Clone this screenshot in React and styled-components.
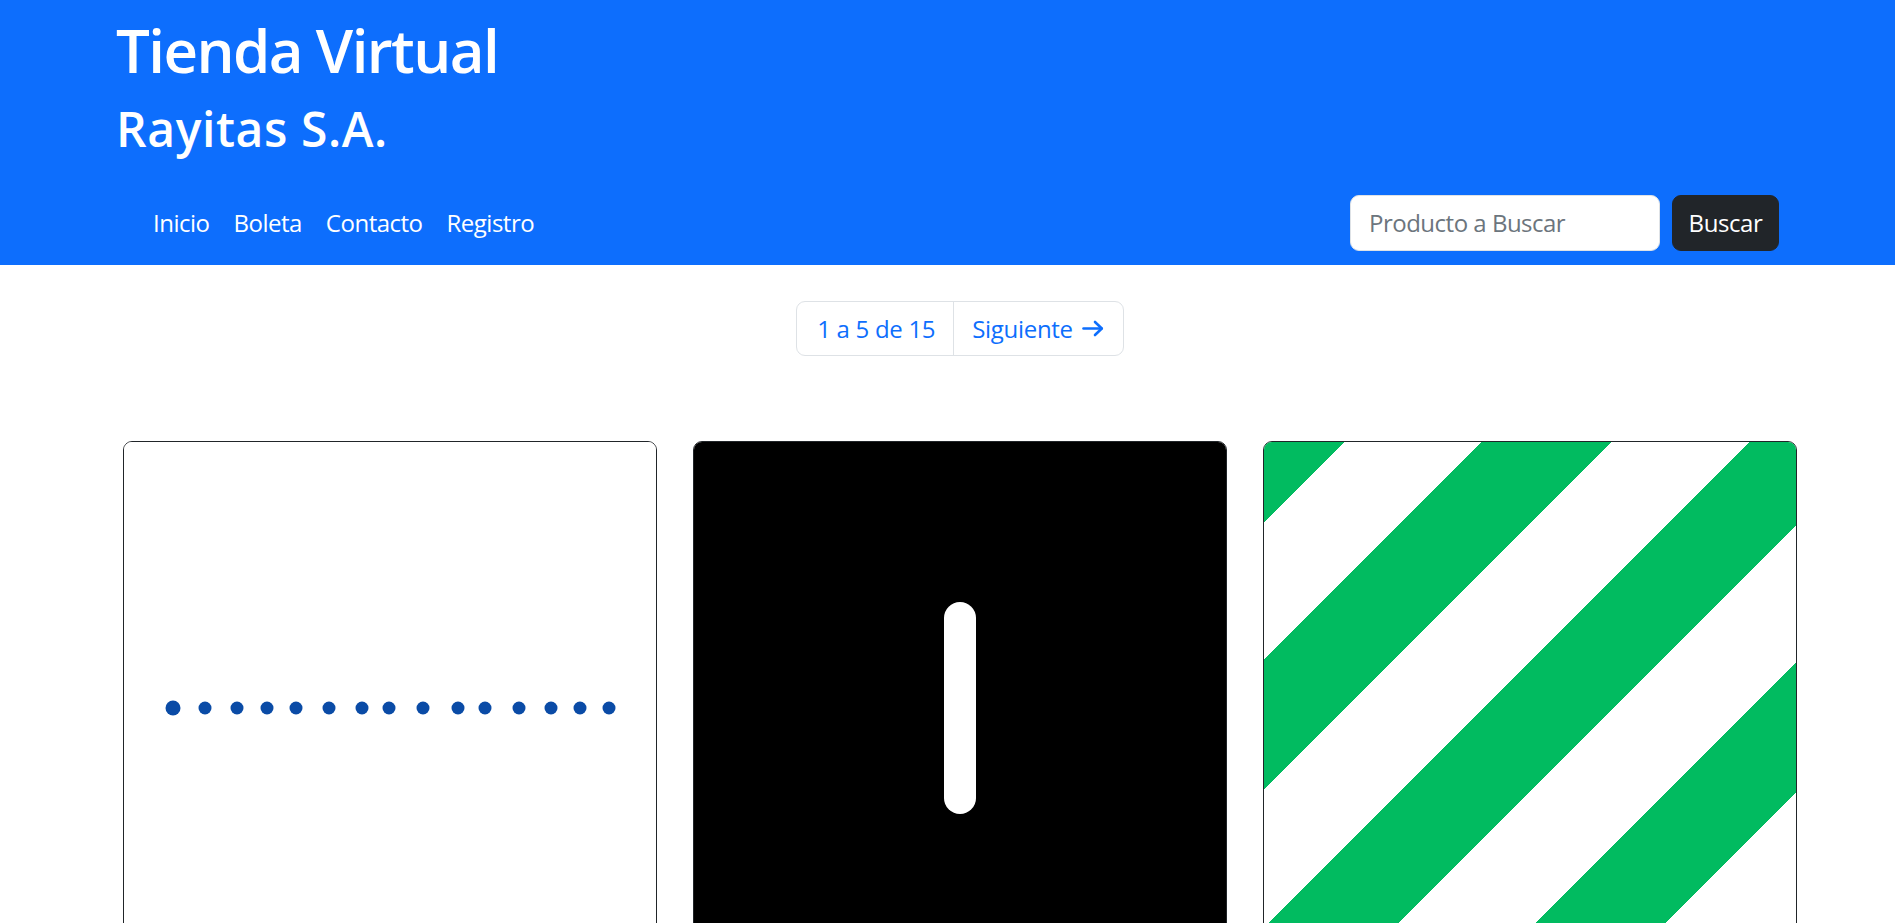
import React from 'react';
import styled, { createGlobalStyle } from 'styled-components';

const GlobalStyle = createGlobalStyle`
  body {
    margin: 0;
    font-family: "Segoe UI", "Open Sans", "Noto Sans", sans-serif;
    color: #212529;
    background: #fff;
  }
`;

const Header = styled.header`
  background-color: #0d6efd;
  color: #fff;
  padding: 14px 116px 14px 116px;
`;

const Brand = styled.h1`
  margin: 0 0 14px;
  font-size: 60px;
  font-weight: 600;
  line-height: 72px;
  letter-spacing: -1.6px;
`;

const SubBrand = styled.h2`
  margin: 0;
  font-size: 48px;
  font-weight: 600;
  line-height: 57.6px;
  letter-spacing: 0.6px;
`;

const NavBar = styled.nav`
  display: flex;
  align-items: center;
  justify-content: space-between;
  margin-top: 37px;
`;

const NavList = styled.ul`
  display: flex;
  list-style: none;
  margin: 0;
  padding: 0 0 0 25px;
`;

const NavLink = styled.a`
  display: block;
  padding: 0 12px;
  font-size: 24px;
  line-height: 36px;
  letter-spacing: -0.5px;
  color: #fff;
  text-decoration: none;
`;

const SearchForm = styled.form`
  display: flex;
  gap: 12px;
`;

const SearchInput = styled.input`
  width: 310px;
  height: 56px;
  box-sizing: border-box;
  padding: 9px 18px;
  font-family: inherit;
  font-size: 24px;
  letter-spacing: -0.5px;
  color: #212529;
  background: #fff;
  border: 1px solid #dee2e6;
  border-radius: 9px;

  &::placeholder {
    color: #6c757d;
  }

  &:focus {
    outline: none;
  }
`;

const SearchButton = styled.button`
  width: 107px;
  height: 56px;
  padding: 0;
  font-family: inherit;
  font-size: 24px;
  letter-spacing: -0.4px;
  color: #fff;
  background-color: #212529;
  border: 1px solid #212529;
  border-radius: 9px;
  cursor: pointer;
`;

const Main = styled.main`
  padding: 36px 0 0 25px;
`;

const Container = styled.div`
  max-width: 1710px;
  margin: 0 auto;
  padding: 0 18px;
  box-sizing: border-box;
`;

const PagerRow = styled.div`
  display: flex;
  justify-content: center;
  margin-bottom: 85px;
`;

const Pager = styled.div`
  display: flex;
  border: 1px solid #dee2e6;
  border-radius: 9px;
  height: 55px;
  box-sizing: border-box;
`;

const PageItem = styled.a`
  display: flex;
  align-items: center;
  gap: 9px;
  padding: ${(p) => (p.$first ? '0 18px 0 20px' : '0 19px 0 18px')};
  font-size: 24px;
  letter-spacing: -0.3px;
  color: #0d6efd;
  text-decoration: none;
  border-left: ${(p) => (p.$first ? 'none' : '1px solid #dee2e6')};
`;

const CardGrid = styled.div`
  display: grid;
  grid-template-columns: repeat(3, 1fr);
  gap: 36px;
`;

const Card = styled.div`
  border: 1px solid #212529;
  border-radius: 9px;
  overflow: hidden;
  background: #fff;
`;

const CardImage = styled.div`
  aspect-ratio: 1 / 1;
  background: ${(p) => p.$bg};

  svg {
    display: block;
    width: 100%;
    height: 100%;
  }
`;

const StripedImage = styled(CardImage)`
  background: repeating-linear-gradient(
    135deg,
    #01bb60 0px,
    #01bb60 57px,
    #fff 57px,
    #fff 154px,
    #01bb60 154px,
    #01bb60 189px
  );
`;

const dots = [49, 81, 113, 143, 172, 205, 238, 265, 299, 334, 361, 395, 427, 456, 485];

const ArrowRight = () => (
  <svg width="22" height="17" viewBox="0 0 22 17" fill="none" stroke="currentColor" strokeWidth="2.6" strokeLinecap="round" strokeLinejoin="round">
    <path d="M1.5 8.5h18" />
    <path d="M13 2l6.8 6.5L13 15" />
  </svg>
);

const App = () => {
  return (
    <>
      <GlobalStyle />
      <Header>
        <Brand>Tienda Virtual</Brand>
        <SubBrand>Rayitas S.A.</SubBrand>
        <NavBar>
          <NavList>
            <li><NavLink href="#">Inicio</NavLink></li>
            <li><NavLink href="#">Boleta</NavLink></li>
            <li><NavLink href="#">Contacto</NavLink></li>
            <li><NavLink href="#">Registro</NavLink></li>
          </NavList>
          <SearchForm onSubmit={(e) => e.preventDefault()}>
            <SearchInput type="search" placeholder="Producto a Buscar" />
            <SearchButton type="submit">Buscar</SearchButton>
          </SearchForm>
        </NavBar>
      </Header>
      <Main>
        <Container>
          <PagerRow>
            <Pager>
              <PageItem $first href="#">1 a 5 de 15</PageItem>
              <PageItem href="#">
                Siguiente <ArrowRight />
              </PageItem>
            </Pager>
          </PagerRow>
          <CardGrid>
            <Card>
              <CardImage $bg="#fff">
                <svg viewBox="0 0 532 532">
                  {dots.map((x, i) => (
                    <circle key={i} cx={x} cy={266} r={i === 0 ? 7.5 : 6.5} fill="#0a4ba6" />
                  ))}
                </svg>
              </CardImage>
            </Card>
            <Card>
              <CardImage $bg="#000">
                <svg viewBox="0 0 532 532">
                  <rect x="250" y="160" width="32" height="212" rx="16" fill="#fff" />
                </svg>
              </CardImage>
            </Card>
            <Card>
              <StripedImage />
            </Card>
          </CardGrid>
        </Container>
      </Main>
    </>
  );
};

export default App;
